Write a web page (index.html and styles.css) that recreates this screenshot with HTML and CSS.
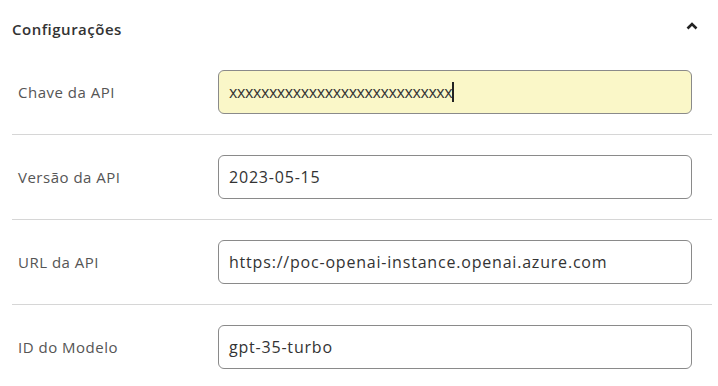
FILE: index.html
```html
<!DOCTYPE html>
<html lang="pt-BR">
<head>
  <meta charset="UTF-8" />
  <meta name="viewport" content="width=device-width, initial-scale=1.0"/>
  <title>Configurações</title>
  <link rel="stylesheet" href="styles.css">
</head>
<body>
  <div class="panel">
    <div class="panel-head">
      <h3>Configurações</h3>
      <button class="collapse-btn" aria-label="Recolher">
        <svg width="12" height="8" viewBox="0 0 12 8">
          <path d="M1.5 6.5 L6 2 L10.5 6.5" fill="none" stroke="#222" stroke-width="2.6" stroke-linejoin="miter"/>
        </svg>
      </button>
    </div>

    <div class="field">
      <label for="api-key">Chave da API</label>
      <div class="input-box autofill">
        <span class="value">xxxxxxxxxxxxxxxxxxxxxxxxxxxx</span><span class="caret"></span>
      </div>
    </div>

    <div class="field">
      <label for="api-version">Versão da API</label>
      <div class="input-box"><span class="value">2023-05-15</span></div>
    </div>

    <div class="field">
      <label for="api-url">URL da API</label>
      <div class="input-box"><span class="value">https://poc-openai-instance.openai.azure.com</span></div>
    </div>

    <div class="field">
      <label for="model-id">ID do Modelo</label>
      <div class="input-box"><span class="value">gpt-35-turbo</span></div>
    </div>
  </div>
</body>
</html>
```

FILE: styles.css
```css
* {
  box-sizing: border-box;
  margin: 0;
  padding: 0;
}

body {
  font-family: 'Open Sans', 'Lato', sans-serif;
  background: #fff;
  color: #333;
}

.panel {
  padding: 0 6px 0 12px;
}

.panel-head {
  height: 50px;
  display: flex;
  align-items: center;
  justify-content: space-between;
  padding-top: 8px;
  padding-right: 14px;
}

.panel-head h3 {
  font-size: 15px;
  font-weight: 600;
  letter-spacing: 0.5px;
  color: #333;
}

.collapse-btn {
  background: none;
  border: none;
  display: flex;
  margin-bottom: 6px;
  cursor: pointer;
}

.field {
  display: flex;
  align-items: center;
  padding: 20px 20px 20px 6px;
  border-bottom: 1px solid #d6d6d6;
}

.field:last-child {
  border-bottom: none;
}

.field label {
  width: 200px;
  font-size: 15px;
  letter-spacing: 0.5px;
  color: #555;
}

.input-box {
  flex: 1;
  height: 44px;
  border: 1px solid #8a8a8a;
  border-radius: 6px;
  display: flex;
  align-items: center;
  padding: 0 10px;
  font-size: 16px;
  letter-spacing: 0.8px;
  color: #333;
}

.input-box.autofill {
  background: #faf7c8;
}

.input-box.autofill .value {
  letter-spacing: -0.4px;
}

.caret {
  width: 1.5px;
  height: 20px;
  background: #222;
}
```
